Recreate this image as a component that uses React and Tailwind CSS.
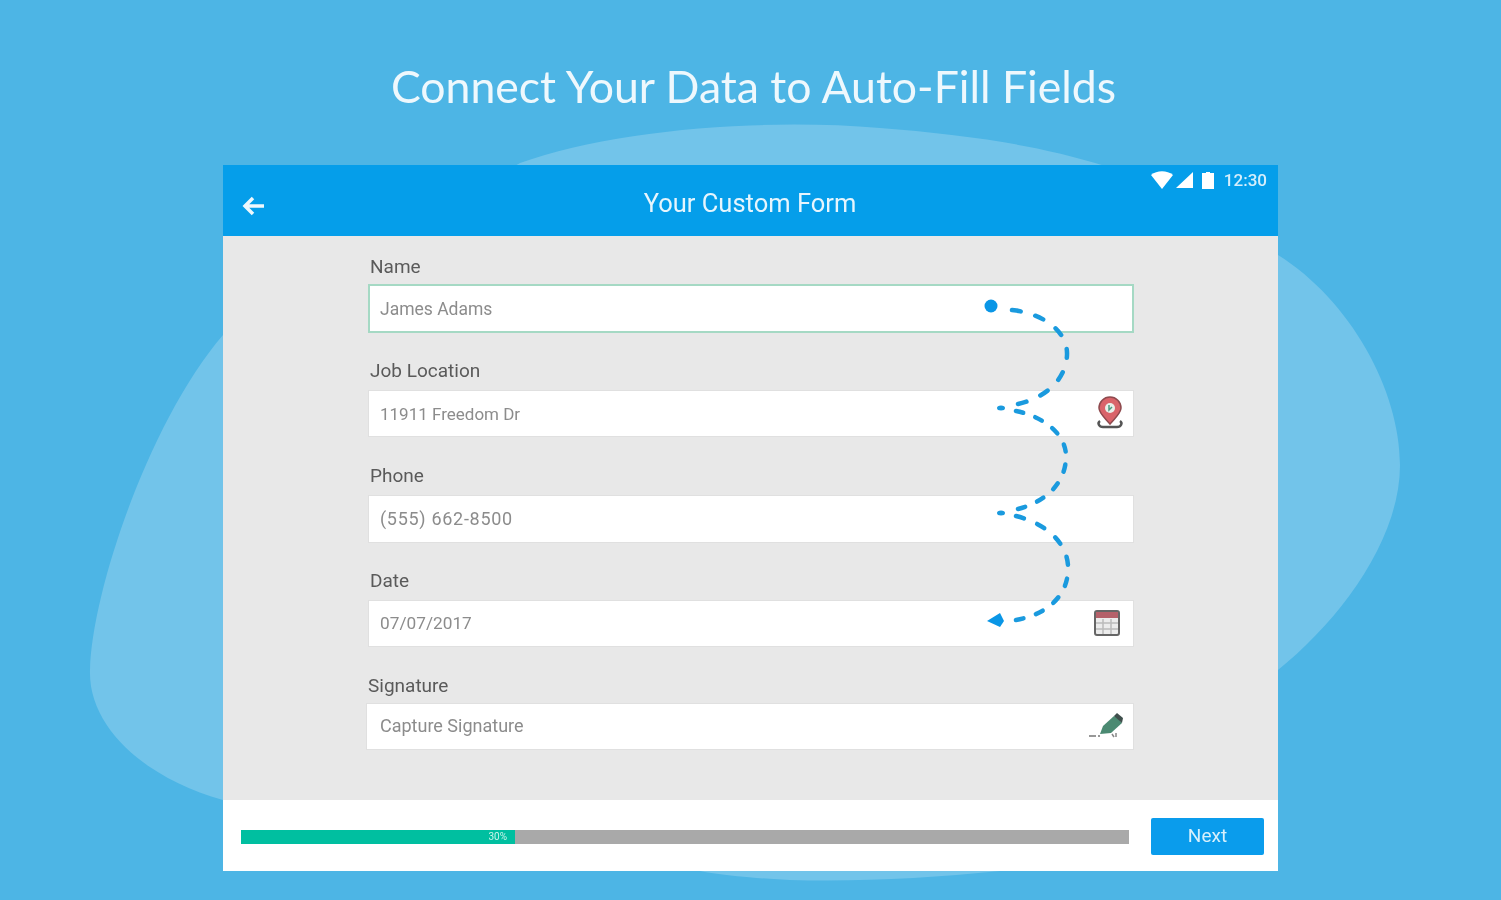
import React from 'react'

const PinIcon = () => (
  <svg width="28" height="34" viewBox="0 0 28 34">
    <path d="M4 25c-3 2-1 6 3 6h14c4 0 6-4 3-6" fill="none" stroke="#555" strokeWidth="2.5" />
    <path d="M14 28C8 21 3 17 3 12a11 11 0 0 1 22 0c0 5-5 9-11 16z" fill="#d9646a" stroke="#8e4a4e" strokeWidth="1.5" />
    <circle cx="14" cy="12" r="5" fill="#e8f0ea" />
    <path d="M13 9v5l3-3" fill="none" stroke="#4a9a80" strokeWidth="1.5" />
  </svg>
)

const CalendarIcon = () => (
  <svg width="26" height="26" viewBox="0 0 26 26">
    <rect x="1" y="1" width="24" height="24" rx="2" fill="#ececec" stroke="#666" strokeWidth="2" />
    <rect x="2" y="2" width="22" height="6" fill="#b5616a" />
    <path d="M2 13h22M2 19h22M9 9v15M17 9v15" stroke="#bbb" strokeWidth="1.5" />
  </svg>
)

const PenIcon = () => (
  <svg width="36" height="28" viewBox="0 0 36 28">
    <path d="M1 24h7M10 24h2" stroke="#777" strokeWidth="1.5" />
    <path d="M12 22l3-8 11-10 4 2 4 5-11 10z" fill="#4b8a72" />
    <path d="M26 4l3-3 6 5-1 5z" fill="#3f4f4c" />
    <path d="M24 22l2 3M28 21v4" stroke="#888" strokeWidth="1.5" />
  </svg>
)

const fields = [
  { label: 'Name', value: 'James Adams', wrap: 'mt-[21px]', labelGap: 'mb-[7px]', box: 'h-[49px] border-2 border-[#a5d9c4] pl-[10px]', valueClass: 'mt-[2px] text-[17.5px]' },
  { label: 'Job Location', value: '11911 Freedom Dr', wrap: 'mt-[28px]', labelGap: 'mb-[9px]', box: 'h-[47px] border border-[#e0e0e0] pl-[11px]', valueClass: 'mt-[2px] text-[17px]', icon: <PinIcon />, iconPos: 'mr-[9px] -mt-[2px]' },
  { label: 'Phone', value: '(555) 662-8500', wrap: 'mt-[29px]', labelGap: 'mb-[9px]', box: 'h-[48px] border border-[#e0e0e0] pl-[11px]', valueClass: '-mt-[2px] text-[18px] tracking-[0.7px]' },
  { label: 'Date', value: '07/07/2017', wrap: 'mt-[28px]', labelGap: 'mb-[9px]', box: 'h-[47px] border border-[#e0e0e0] pl-[11px]', valueClass: 'text-[17.25px]', icon: <CalendarIcon />, iconPos: 'mr-[13px] -mt-[2px]' },
  { label: 'Signature', value: 'Capture Signature', wrap: 'mt-[29px] -ml-[2px]', labelGap: 'mb-[7px]', box: 'h-[47px] border border-[#e0e0e0] pl-[13px]', valueClass: '-mt-[2px] text-[18px]', icon: <PenIcon />, iconPos: 'mr-[9px] -mt-[2px]' },
]

const Field = ({ label, value, wrap, labelGap, box, valueClass, icon, iconPos }) => (
  <div className={wrap}>
    <div className={`h-[20px] pl-[2px] text-[19px] leading-[20px] text-[#5a5a5a] ${labelGap}`}>{label}</div>
    <div className={`flex items-center justify-between bg-white ${box}`}>
      <span className={`text-[#8c8c8c] ${valueClass}`}>{value}</span>
      {icon && <span className={iconPos}>{icon}</span>}
    </div>
  </div>
)

export default function App() {
  return (
    <div className="relative h-[900px] overflow-hidden bg-[#4db5e5] font-['Roboto',sans-serif] blur-[0.7px]">
      {/* background blob */}
      <svg className="absolute inset-0" width="1501" height="900" viewBox="0 0 1501 900">
        <path
          d="M520 163C610 130 760 118 880 128C960 134 1040 145 1105 166L1278 255C1350 300 1400 390 1400 465C1400 540 1340 620 1278 670L1000 871C930 878 860 882 790 880C750 878 720 875 700 871L223 800C150 780 88 730 90 670C92 590 150 420 223 335Z"
          fill="#72c4ea"
        />
      </svg>

      <h1 className="relative pl-[6px] pt-[58px] text-center font-['Lato',sans-serif] text-[44.6px] font-normal leading-[56px] text-[#eef8fd]">
        Connect Your Data to Auto-Fill Fields
      </h1>

      {/* form card */}
      <div className="relative ml-[223px] mt-[51px] w-[1055px]">
        <div className="relative flex h-[71px] items-center justify-center bg-[#059eea]">
          <svg className="absolute left-[18px] top-[28px]" width="26" height="26" viewBox="0 0 26 26" fill="none" stroke="#eef8fd" strokeWidth="3.5">
            <path d="M23 13H5M12 5l-8 8 8 8" />
          </svg>
          <span className="mt-[6px] ml-[-1px] text-[25.5px] text-[#e6f5fd]">Your Custom Form</span>
          {/* status bar */}
          <div className="absolute right-[11px] top-[5px] flex items-center">
            <svg width="22" height="18" viewBox="0 0 22 18"><path d="M0 4C6-1 16-1 22 4L11 18z" fill="#fff" /></svg>
            <svg className="ml-[3px]" width="17" height="16" viewBox="0 0 17 16"><path d="M17 0v16H0z" fill="#fff" /></svg>
            <svg className="ml-[9px]" width="12" height="17" viewBox="0 0 12 17"><path d="M4 0h4v1h4v16H0V1h4z" fill="#fff" /></svg>
            <span className="ml-[10px] text-[17px] font-medium leading-[20px] text-[#d5eefb]">12:30</span>
          </div>
        </div>

        <div className="flow-root h-[564px] bg-[#e8e8e8] pl-[145px] pr-[144px]">
          {fields.map((f) => (
            <Field key={f.label} {...f} />
          ))}
        </div>

        <div className="flex h-[71px] items-center bg-white pl-[18px] pr-[14px]">
          <div className="mt-[3px] flex h-[14px] w-[888px] bg-[#a9a9a9]">
            <div className="flex w-[274px] items-center justify-end bg-[#00bfa0] pr-[8px] text-[10px] leading-none text-[#c9f3ea]">30%</div>
          </div>
          <button className="ml-auto mt-[2px] h-[37px] w-[113px] rounded-[2px] bg-[#0a9cec] text-[19px] text-[#d8f0fc]">Next</button>
        </div>
      </div>

      {/* dashed connector */}
      <svg className="pointer-events-none absolute inset-0" width="1501" height="900" viewBox="0 0 1501 900" fill="none">
        <circle cx="991" cy="306" r="6.5" fill="#0a96e6" />
        <g stroke="#1a9ade" strokeWidth="4.5" strokeDasharray="8 14" strokeLinecap="round">
          <path pathLength="140" d="M1018 404C1045 398 1066 380 1067 355C1068 332 1045 314 1012 310" />
          <path pathLength="81" d="M1016 411C1045 417 1067 435 1066 458" />
          <path pathLength="81" d="M1018 509C1045 502 1065 484 1066 458" />
          <path pathLength="81" d="M1016 516C1048 524 1070 545 1068 572" />
          <path pathLength="81" d="M1016 620C1045 615 1066 598 1068 572" />
        </g>
        <ellipse cx="1001" cy="408" rx="4" ry="2.5" fill="#1a9ade" />
        <ellipse cx="1001" cy="513" rx="4" ry="2.5" fill="#1a9ade" />
        <path d="M987 621l13-8 4 8-4 6z" fill="#0a96e6" />
      </svg>
    </div>
  )
}
